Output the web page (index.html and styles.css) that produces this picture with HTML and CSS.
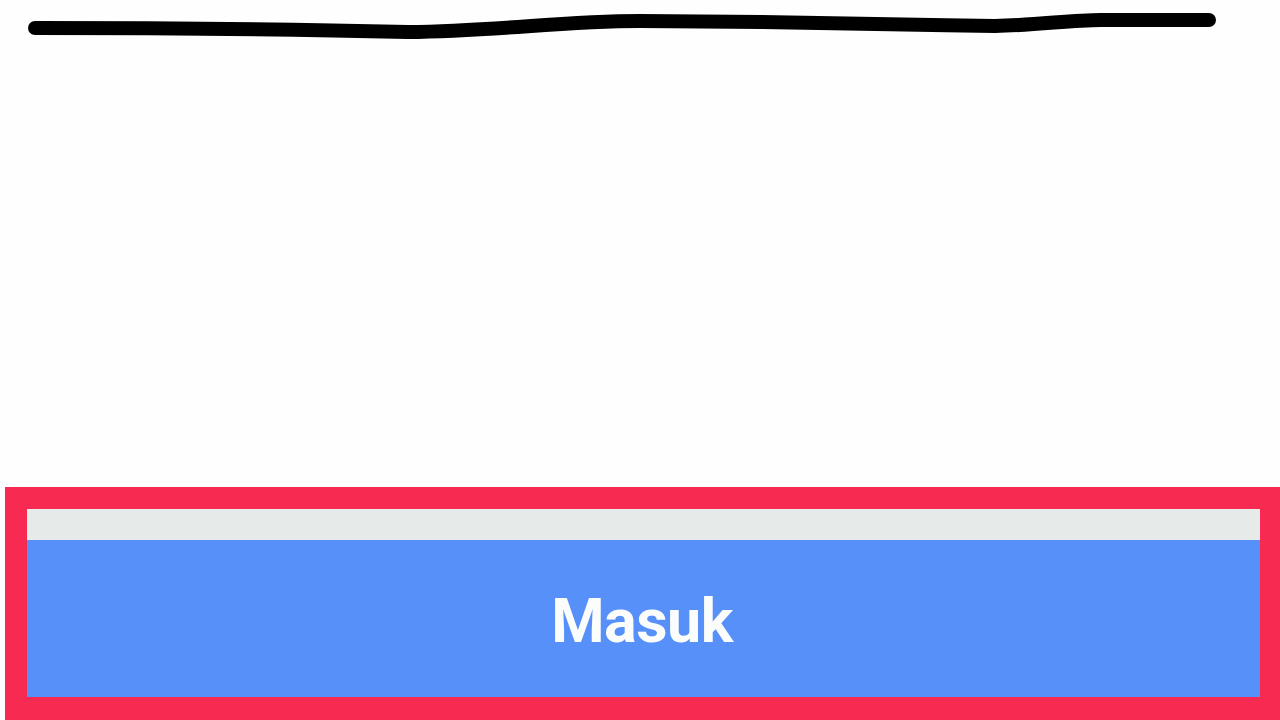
FILE: index.html
```
<!DOCTYPE html>
<html lang="id">
<head>
<meta charset="utf-8">
<title>Masuk</title>
<link rel="stylesheet" href="styles.css">
</head>
<body>
<div class="page">
  <svg class="scribble" width="1280" height="60" viewBox="0 0 1280 60" aria-hidden="true">
    <path d="M35 28 C 150 28, 280 29, 408 32 C 500 31, 560 21, 640 21 L 762 22 C 850 23, 920 25, 995 26 C 1040 25, 1070 20, 1101 20 L 1209 20" fill="none" stroke="#000" stroke-width="14" stroke-linecap="round" stroke-linejoin="round"/>
  </svg>
  <div class="spacer"></div>
  <div class="frame">
    <div class="bar"></div>
    <button class="btn">Masuk</button>
  </div>
</div>
</body>
</html>
```

FILE: styles.css
```
html, body {
  margin: 0;
  padding: 0;
  background: #fefefe;
}
.page {
  width: 1280px;
  height: 720px;
  display: flex;
  flex-direction: column;
  overflow: hidden;
}
.scribble {
  display: block;
  flex: none;
}
.spacer {
  flex: 1;
}
.frame {
  flex: none;
  height: 233px;
  box-sizing: border-box;
  margin-left: 5px;
  padding: 22px 20px 23px 22px;
  background: #f72b52;
  display: flex;
  flex-direction: column;
}
.bar {
  height: 31px;
  background: #e6ebe9;
  flex: none;
}
.btn {
  flex: 1;
  border: 0;
  margin: 0;
  padding: 4px 3px 0 0;
  background: #5690f8;
  color: #fbfdfc;
  font-family: Roboto, "Liberation Sans", sans-serif;
  font-weight: 700;
  font-size: 61px;
  letter-spacing: -0.5px;
  display: flex;
  align-items: center;
  justify-content: center;
}
```
